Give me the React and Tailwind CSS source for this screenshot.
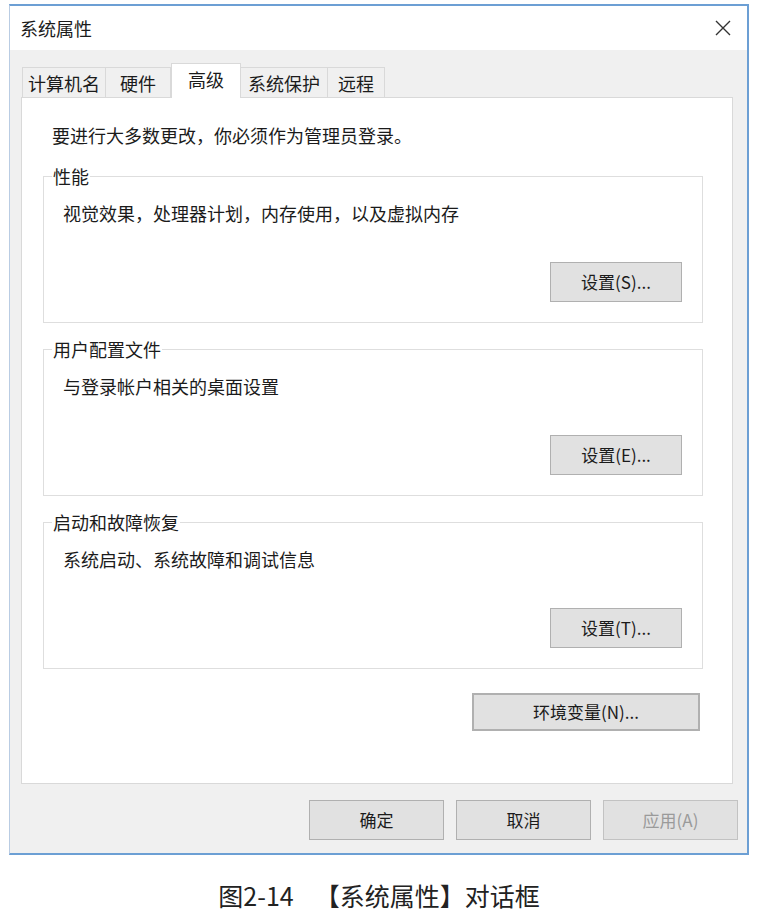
import React from 'react'

const FONT = { fontFamily: '"Noto Sans CJK SC", "Noto Sans", sans-serif' }

const tabs = [
  { label: '计算机名', w: 'w-[84px]' },
  { label: '硬件', w: 'w-[66px]' },
  { label: '高级', w: 'w-[70px]', active: true },
  { label: '系统保护', w: 'w-[88px]' },
  { label: '远程', w: 'w-[58px]' }
]

const groups = [
  { title: '性能', text: '视觉效果，处理器计划，内存使用，以及虚拟内存', button: '设置(S)...' },
  { title: '用户配置文件', text: '与登录帐户相关的桌面设置', button: '设置(E)...' },
  { title: '启动和故障恢复', text: '系统启动、系统故障和调试信息', button: '设置(T)...' }
]

const Button = ({ children, className = '' }) => (
  <button
    type="button"
    className={`flex items-center justify-center text-[17px] leading-[22px] text-[#1b1b1b] bg-[#e1e1e1] border border-[#b0b0b0] ${className}`}
  >
    {children}
  </button>
)

const GroupBox = ({ title, text, button }) => (
  <div className="relative ml-[21px] w-[660px] h-[147px] border border-[#dedede] flex flex-col justify-between pt-[25px] pb-[20px] pr-[20px]">
    {/* legend sits on the top border */}
    <span className="absolute -top-[12px] left-[8px] bg-white px-[1px] text-[18px] leading-[22px] text-[#1b1b1b]">
      {title}
    </span>
    <div className="pl-[19px] text-[18px] leading-[22px] text-[#1b1b1b]">{text}</div>
    <Button className="self-end w-[132px] h-[40px]">{button}</Button>
  </div>
)

const App = () => {
  return (
    <div className="w-[772px] min-h-[921px] bg-white pt-[4px] pl-[9px]" style={FONT}>
      <div className="w-[740px] h-[851px] flex flex-col bg-[#f0f0f0] border-t-2 border-r-2 border-b-2 border-l border-[#6c9fd4] border-l-[#b9cce3]">
        {/* title bar */}
        <div className="h-[44px] bg-white flex items-center justify-between pl-[10px] pr-[16px]">
          <span className="text-[18px] leading-[22px] text-[#1b1b1b]">系统属性</span>
          <svg width="16" height="16" viewBox="0 0 16 16" className="text-[#333]">
            <path d="M1 1 L15 15 M15 1 L1 15" stroke="currentColor" strokeWidth="1.4" fill="none" />
          </svg>
        </div>

        <div className="flex-1 flex flex-col pl-[11px] pr-[9px] pt-[13px]">
          {/* tabs */}
          <div className="flex items-end ml-[1px]">
            {tabs.map(tab =>
              tab.active ? (
                <div
                  key={tab.label}
                  className={`${tab.w} h-[35px] -mb-px relative z-10 bg-white border border-b-0 border-[#d9d9d9] flex justify-center pt-[4px] text-[18px] leading-[22px] text-[#1b1b1b]`}
                >
                  {tab.label}
                </div>
              ) : (
                <div
                  key={tab.label}
                  className={`${tab.w} h-[30px] -ml-px first:ml-0 bg-[#f0f0f0] border border-b-0 border-[#d9d9d9] flex items-center justify-center text-[18px] leading-[22px] text-[#1b1b1b]`}
                >
                  {tab.label}
                </div>
              )
            )}
          </div>

          {/* tab panel */}
          <div className="w-[712px] h-[687px] bg-white border border-[#d9d9d9] flex flex-col">
            <div className="pl-[30px] pt-[25px] text-[18px] leading-[24px] text-[#1b1b1b]">
              要进行大多数更改，你必须作为管理员登录。
            </div>
            <div className="mt-[29px] flex flex-col gap-[26px]">
              {groups.map(g => (
                <GroupBox key={g.title} {...g} />
              ))}
            </div>
            <div className="mt-[24px] flex justify-end pr-[32px]">
              <Button className="w-[228px] h-[38px] border-2 border-[#2f6fb8]">环境变量(N)...</Button>
            </div>
          </div>

          {/* dialog buttons */}
          <div className="mt-[16px] flex justify-end gap-[12px]">
            <Button className="w-[135px] h-[40px]">确定</Button>
            <Button className="w-[135px] h-[40px]">取消</Button>
            <Button className="w-[135px] h-[40px] bg-[#cccccc] border-[#c2c2c2] text-[#9a9a9a]">应用(A)</Button>
          </div>
        </div>
      </div>

      <div className="w-[740px] mt-[23px] flex justify-center text-[25px] leading-[34px] text-[#222]">
        <span>图2-14</span>
        <span className="ml-[21px]">【系统属性】对话框</span>
      </div>
    </div>
  )
}

export default App
